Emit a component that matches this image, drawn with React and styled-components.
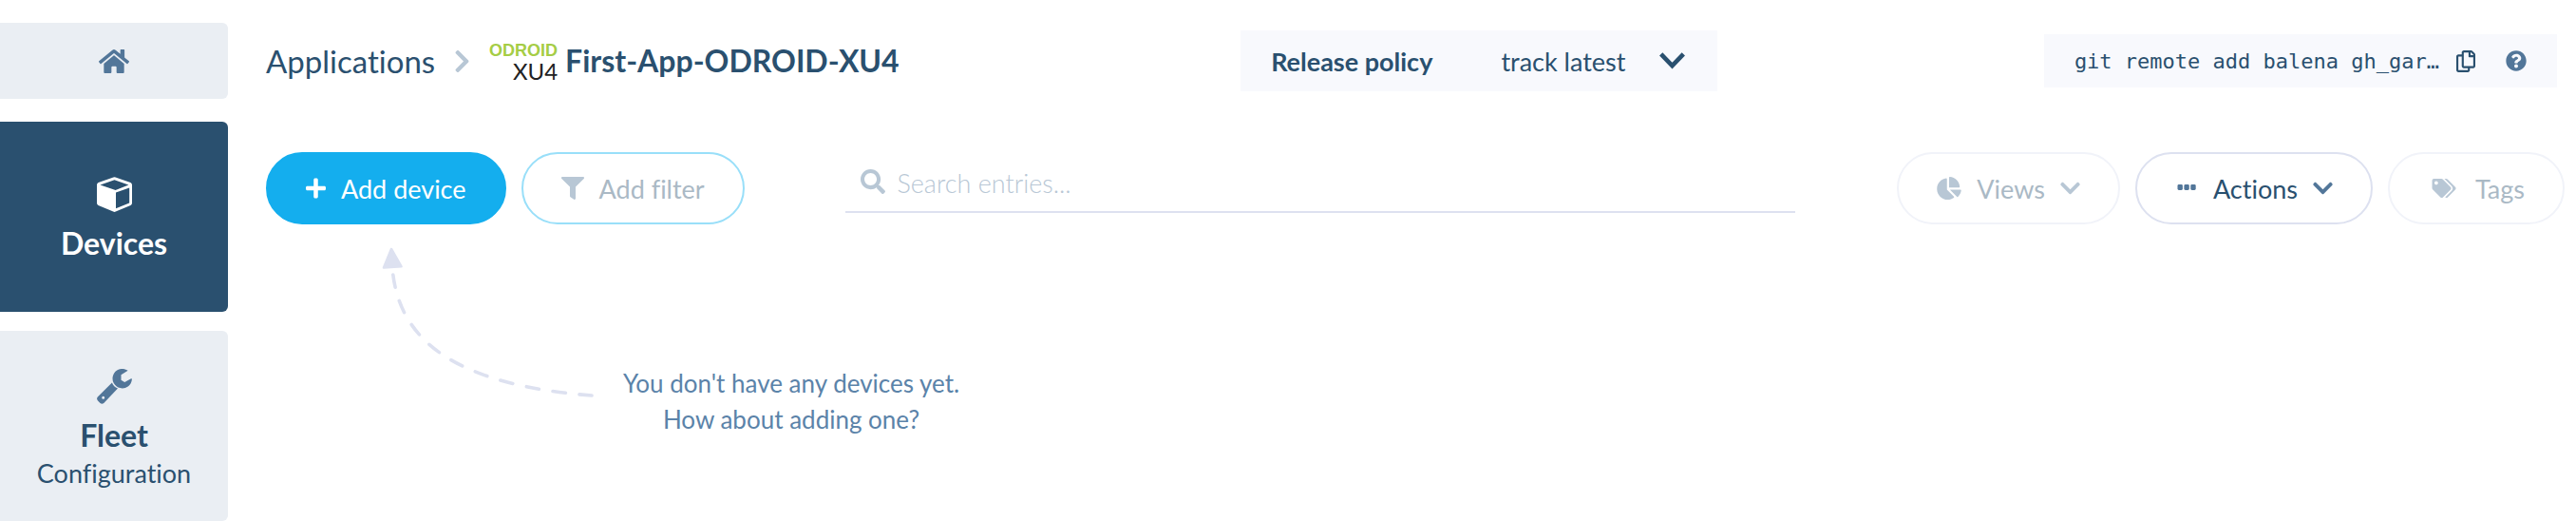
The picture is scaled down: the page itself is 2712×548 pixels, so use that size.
import React from 'react';
import styled, { createGlobalStyle } from 'styled-components';
import {
  FaHome, FaPlus, FaFilter, FaSearch, FaChartPie, FaChevronDown, FaChevronRight, FaTags, FaRegCopy, FaQuestionCircle,
} from 'react-icons/fa';

const color = {
  text: '#2a506f',
  icon: '#527699',
  muted: '#b8c7d5',
  note: '#5b83a9',
  panel: '#f8f9fd',
  line: '#dde1f0',
  tile: '#eaeef3',
  primary: '#14aeee',
};

const GlobalStyle = createGlobalStyle`
  *, *::before, *::after { box-sizing: border-box; }
  body {
    margin: 0;
    background: #fff;
    color: ${color.text};
    font-family: Lato, "Open Sans", sans-serif;
    font-variant-ligatures: none;
  }
  button, input, select { font: inherit; font-variant-ligatures: none; color: inherit; margin: 0; }
  svg { display: block; flex: none; }
`;

const Page = styled.div`
  display: flex;
  align-items: flex-start;
`;

const Sidebar = styled.nav`
  flex: 0 0 240px;
  display: flex;
  flex-direction: column;
  padding-top: 24px;
`;

const NavTile = styled.a`
  display: flex;
  flex-direction: column;
  align-items: center;
  height: ${(p) => (p.$compact ? 80 : 200)}px;
  padding-top: ${(p) => p.$top}px;
  margin-bottom: ${(p) => (p.$compact ? 24 : 20)}px;
  border-radius: 0 6px 6px 0;
  background: ${(p) => (p.$active ? color.text : color.tile)};
  color: ${(p) => (p.$active ? '#fff' : color.icon)};
  text-decoration: none;
  &:last-child { margin-bottom: 0; }
`;

const NavTitle = styled.span`
  margin-top: 14px;
  font-size: 32px;
  font-weight: 700;
  line-height: 38px;
  color: ${(p) => (p.$active ? '#fff' : color.text)};
`;

const NavSubtitle = styled.span`
  font-size: 27px;
  line-height: 42px;
  color: ${color.text};
`;

const Main = styled.main`
  flex: 1;
  min-width: 0;
  padding: 32px 12px 0 40px;
`;

const Header = styled.header`
  display: flex;
  align-items: center;
  justify-content: space-between;
  padding-right: 8px;
`;

const Breadcrumbs = styled.div`
  display: flex;
  align-items: center;
  padding-right: 16px;
  white-space: nowrap;
  > svg { margin: 0 20px; color: ${color.muted}; }
`;

const CrumbLink = styled.a`
  font-size: 33px;
  line-height: 40px;
  color: ${color.text};
  text-decoration: none;
`;

const DeviceLogo = styled.span`
  display: flex;
  flex-direction: column;
  align-items: flex-end;
  width: 72px;
  margin-right: 8px;
  line-height: 22px;
`;

const LogoBrand = styled.span`
  font-family: "Liberation Sans", sans-serif;
  font-size: 18px;
  font-weight: 700;
  color: #a5cd45;
`;

const LogoModel = styled.span`
  font-size: 24px;
  color: #222;
`;

const AppName = styled.h1`
  margin: 0;
  font-size: 32px;
  font-weight: 700;
  line-height: 40px;
`;

const PolicyBox = styled.div`
  display: flex;
  align-items: center;
  gap: 72px;
  height: 64px;
  padding: 0 32px;
  background: ${color.panel};
  font-size: 27px;
  white-space: nowrap;
  label { font-weight: 700; }
`;

const SelectField = styled.div`
  display: grid;
  align-items: center;
  width: 196px;
  > * { grid-area: 1 / 1; }
  > svg { justify-self: end; margin-right: 2px; pointer-events: none; }
`;

const Select = styled.select`
  appearance: none;
  width: 100%;
  height: 48px;
  padding: 0;
  border: 0;
  background: transparent;
`;

const RemoteBox = styled.div`
  display: flex;
  align-items: center;
  gap: 32px;
  height: 56px;
  padding: 0 32px;
  background: ${color.panel};
`;

const RemoteCommand = styled.code`
  margin-right: -14px;
  font-family: "DejaVu Sans Mono", monospace;
  font-size: 22px;
  white-space: nowrap;
`;

const IconButton = styled.button`
  padding: 0;
  border: 0;
  background: none;
  color: ${(p) => p.$color};
`;

const Toolbar = styled.div`
  display: flex;
  align-items: flex-start;
  justify-content: space-between;
  margin-top: 64px;
`;

const ButtonGroup = styled.div`
  display: flex;
  gap: 16px;
`;

const variants = {
  primary: `background: ${color.primary}; border-color: ${color.primary}; color: #fff;`,
  filter: `border-color: #99dff9; color: #aab9c5; --icon: ${color.muted};`,
  outline: `border-color: ${color.line}; color: ${color.text}; --icon: ${color.icon};`,
  faded: `border-color: #f1f3f9; color: #aab9c5; --icon: ${color.muted};`,
};

const PillButton = styled.button`
  display: flex;
  align-items: center;
  gap: 16px;
  height: 76px;
  padding: 0 40px;
  border: 2px solid;
  border-radius: 38px;
  background: transparent;
  font-size: 27px;
  white-space: nowrap;
  ${(p) => variants[p.$variant]}
  > svg { color: var(--icon, currentColor); }
`;

const SearchField = styled.div`
  flex: 0 1 1000px;
  display: flex;
  align-items: center;
  gap: 12px;
  height: 64px;
  padding: 0 16px;
  border-bottom: 2px solid ${color.line};
  > svg { color: ${color.muted}; }
`;

const SearchInput = styled.input`
  flex: 1;
  min-width: 0;
  height: 48px;
  padding: 2px 0 0;
  border: 0;
  outline: 0;
  background: transparent;
  font-size: 27px;
  font-weight: 300;
  &::placeholder { color: ${color.muted}; opacity: 1; }
`;

const EmptyState = styled.section`
  display: flex;
  gap: 24px;
  padding: 22px 0 0 120px;
`;

const EmptyText = styled.p`
  min-width: 362px;
  margin: 0;
  padding-top: 126px;
  font-size: 26px;
  line-height: 38px;
  text-align: center;
  color: ${color.note};
`;

const CubeIcon = () => (
  <svg width="37" height="37" viewBox="0 0 37 37" fill="currentColor" fillRule="evenodd" aria-hidden="true">
    <path d="M17.4.4Q18.5 0 19.6.4L35.4 6Q37 6.7 37 8.4V27.6Q37 29.3 35.5 30L19.8 36.6Q18.5 37.2 17.2 36.6L1.5 30Q0 29.3 0 27.6V8.4Q0 6.7 1.6 6ZM18.5 3.3L3.5 8.6L19.6 14L33.4 8.4ZM20 16.4V33.3L34.2 27.6V11.5Z" />
  </svg>
);

const WrenchIcon = () => (
  <svg width="37" height="37" viewBox="0 0 37 37" fill="currentColor" fillRule="evenodd" aria-hidden="true">
    <path d="M32.3 2L25.5 6.3V11.8L29.2 14L36 10.3Q37 9.9 36.9 11A10.2 10.2 0 1 1 31.6 1.2Q32.8 1.6 32.3 2Z" />
    <path d="M15.9 14.4Q17.6 18.6 22 20.6L7.3 35.9Q5.4 37.4 3.5 36L1 33.5Q-.8 31.4.8 29.4ZM6.7 28.8A1.5 1.5 0 1 0 6.7 31.8A1.5 1.5 0 1 0 6.7 28.8Z" />
  </svg>
);

const DotsIcon = () => (
  <svg width="24" height="24" viewBox="0 0 24 24" fill="currentColor" aria-hidden="true">
    <rect x="2.5" y="8" width="5.4" height="6" rx="1.4" />
    <rect x="9.4" y="8" width="5.4" height="6" rx="1.4" />
    <rect x="16.3" y="8" width="5.4" height="6" rx="1.4" />
  </svg>
);

const SelectArrow = () => (
  <svg width="27" height="18" viewBox="0 0 27 18" fill="none" stroke={color.text} strokeWidth="4.6" aria-hidden="true">
    <path d="M1.7 1.8L13.5 14.2L25.3 1.8" />
  </svg>
);

const HintArrow = () => (
  <svg width="228" height="162" viewBox="400 258 228 162" aria-hidden="true">
    <path d="M412 262L404 281.5L422.5 280.3Z" fill={color.line} stroke={color.line} strokeWidth="2.6" strokeLinejoin="round" />
    <path
      d="M413.8 289C423 362 485 405 623 416"
      fill="none"
      stroke={color.line}
      strokeWidth="3.6"
      strokeLinecap="round"
      strokeDasharray="13.4 14.8"
    />
  </svg>
);

const HomeIcon = styled(FaHome)`
  width: 32px;
  height: 29px;
`;

const CrumbChevron = styled(FaChevronRight)`
  width: 17px;
  height: 27px;
`;

const PlusIcon = styled(FaPlus)`
  width: 21px;
  height: 24px;
`;

const PieIcon = styled(FaChartPie)`
  width: 26px;
  height: 24px;
`;

const MenuChevron = styled(FaChevronDown)`
  width: 21px;
  height: 24px;
`;

const TagsIcon = styled(FaTags)`
  width: 34px;
  height: 20px;
`;

const CopyIcon = styled(FaRegCopy)`
  width: 20px;
  height: 23px;
`;

export default function App() {
  return (
    <>
      <GlobalStyle />
      <Page>
        <Sidebar>
          <NavTile href="#home" aria-label="Home" $compact $top={26}>
            <HomeIcon />
          </NavTile>
          <NavTile href="#devices" $active $top={58}>
            <CubeIcon />
            <NavTitle $active>Devices</NavTitle>
          </NavTile>
          <NavTile href="#fleet" $top={40}>
            <WrenchIcon />
            <NavTitle>Fleet</NavTitle>
            <NavSubtitle>Configuration</NavSubtitle>
          </NavTile>
        </Sidebar>
        <Main>
          <Header>
            <Breadcrumbs>
              <CrumbLink href="#applications">Applications</CrumbLink>
              <CrumbChevron />
              <DeviceLogo>
                <LogoBrand>ODROID</LogoBrand>
                <LogoModel>XU4</LogoModel>
              </DeviceLogo>
              <AppName>First-App-ODROID-XU4</AppName>
            </Breadcrumbs>
            <PolicyBox>
              <label htmlFor="policy">Release policy</label>
              <SelectField>
                <Select id="policy" defaultValue="latest">
                  <option value="latest">track latest</option>
                </Select>
                <SelectArrow />
              </SelectField>
            </PolicyBox>
            <RemoteBox>
              <RemoteCommand>git remote add balena gh_gar…</RemoteCommand>
              <IconButton aria-label="Copy" $color={color.text}>
                <CopyIcon />
              </IconButton>
              <IconButton aria-label="Help" $color={color.icon}>
                <FaQuestionCircle size={22} />
              </IconButton>
            </RemoteBox>
          </Header>
          <Toolbar>
            <ButtonGroup>
              <PillButton $variant="primary"><PlusIcon />Add device</PillButton>
              <PillButton $variant="filter"><FaFilter size={24} />Add filter</PillButton>
            </ButtonGroup>
            <SearchField>
              <FaSearch size={26} />
              <SearchInput type="search" aria-label="Search entries" placeholder="Search entries..." />
            </SearchField>
            <ButtonGroup>
              <PillButton $variant="faded"><PieIcon />Views<MenuChevron /></PillButton>
              <PillButton $variant="outline"><DotsIcon />Actions<MenuChevron /></PillButton>
              <PillButton $variant="faded"><TagsIcon />Tags</PillButton>
            </ButtonGroup>
          </Toolbar>
          <EmptyState>
            <HintArrow />
            <EmptyText>You don't have any devices yet.<br />How about adding one?</EmptyText>
          </EmptyState>
        </Main>
      </Page>
    </>
  );
}
